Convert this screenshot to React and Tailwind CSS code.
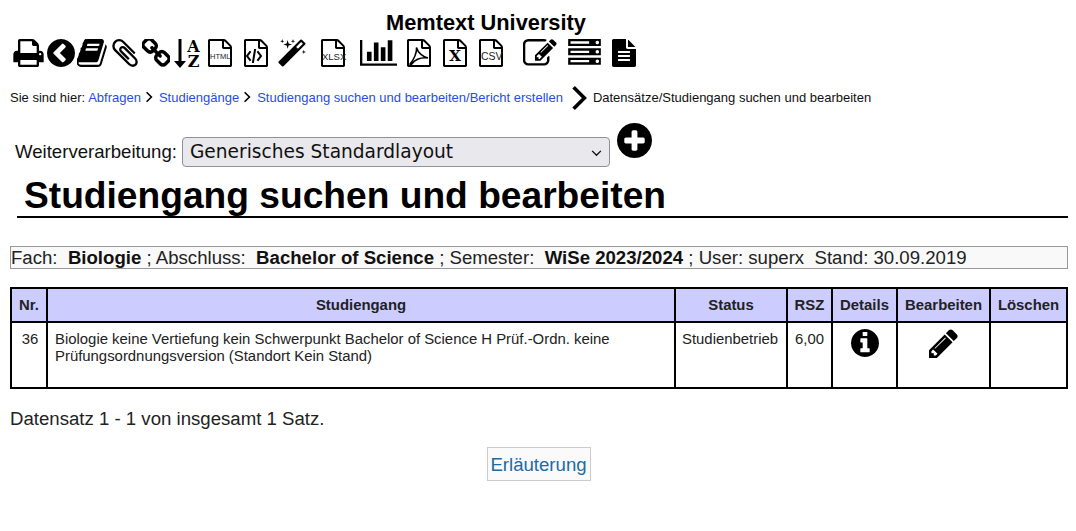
const PATHS = {
  print: "M448 1536h896v-256h-896v256zm0-640h896v-384h-160q-40 0-68-28t-28-68v-160h-640v640zm1152 64q0-26-19-45t-45-19-45 19-19 45 19 45 45 19 45-19 19-45zm128 0v416q0 13-9.5 22.5t-22.5 9.5h-224v160q0 40-28 68t-68 28h-960q-40 0-68-28t-28-68v-160h-224q-13 0-22.5-9.5t-9.5-22.5v-416q0-79 56.5-135.5t135.5-56.5h64v-544q0-40 28-68t68-28h672q40 0 88 20t76 48l152 152q28 28 48 76t20 88v256h64q79 0 135.5 56.5t56.5 135.5z",
  back: "M1037 1395l102-102q19-19 19-45t-19-45l-307-307 307-307q19-19 19-45t-19-45l-102-102q-19-19-45-19t-45 19l-454 454q-19 19-19 45t19 45l454 454q19 19 45 19t45-19zm627-499q0 209-103 385.5t-279.5 279.5-385.5 103-385.5-103-279.5-279.5-103-385.5 103-385.5 279.5-279.5 385.5-103 385.5 103 279.5 279.5 103 385.5z",
  book: "M1639 478q40 57 18 129l-275 906q-19 64-76.5 107.5t-122.5 43.5h-923q-77 0-148.5-53.5t-99.5-131.5q-24-67-2-127 0-4 3-27t4-37q1-8-3-21.5t-3-19.5q2-11 8-21t16.5-23.5 16.5-23.5q23-38 45-91.5t30-91.5q3-10 .5-30t-.5-28q3-11 17-28t17-23q21-36 42-92t25-90q1-9-2.5-32t.5-28q4-13 22-30.5t22-22.5q19-26 42.5-84.5t27.5-96.5q1-8-3-25.5t-2-26.5q2-8 9-18t18-23 17-21q8-12 16.5-30.5t15-35 16-36 19.5-32 26.5-23.5 36-11.5 47.5 5.5l-1 3q38-9 51-9h761q74 0 114 56t18 130l-274 906q-36 119-71.5 153.5t-128.5 34.5h-869q-27 0-38 15-11 16-1 43 24 70 144 70h923q29 0 56-15.5t35-41.5l300-987q7-22 5-57 38 15 59 43zm-1064 2q-4 13 2 22.5t20 9.5h608q13 0 25.5-9.5t16.5-22.5l21-64q4-13-2-22.5t-20-9.5h-608q-13 0-25.5 9.5t-16.5 22.5zm-83 256q-4 13 2 22.5t20 9.5h608q13 0 25.5-9.5t16.5-22.5l21-64q4-13-2-22.5t-20-9.5h-608q-13 0-25.5 9.5t-16.5 22.5z",
  clip: "M1596 1385q0 117-79 196t-196 79q-135 0-235-100l-777-776q-113-115-113-271 0-159 110-270t269-111q158 0 273 113l605 606q10 10 10 22 0 16-30.5 46.5t-46.5 30.5q-13 0-23-10l-606-607q-79-77-181-77-106 0-179 75t-73 181q0 105 76 181l776 777q63 63 145 63 64 0 106-42t42-106q0-82-63-145l-581-581q-26-24-60-24-29 0-48 19t-19 48q0 32 25 59l410 410q10 10 10 22 0 16-31 47t-47 31q-12 0-22-10l-410-410q-63-61-63-149 0-82 57-139t139-57q88 0 149 63l581 581q100 98 100 235z",
  link: "M1520 1216q0-40-28-68l-208-208q-28-28-68-28-42 0-72 32 3 3 19 18.5t21.5 21.5 15 19 13 25.5 3.5 27.5q0 40-28 68t-68 28q-15 0-27.5-3.5t-25.5-13-19-15-21.5-21.5-18.5-19q-33 31-33 73 0 40 28 68l206 207q27 27 68 27 40 0 68-26l147-146q28-28 28-67zm-703-705q0-40-28-68l-206-207q-28-28-68-28-39 0-68 27l-147 146q-28 28-28 67 0 40 28 68l208 208q27 27 68 27 42 0 72-31-3-3-19-18.5t-21.5-21.5-15-19-13-25.5-3.5-27.5q0-40 28-68t68-28q15 0 27.5 3.5t25.5 13 19 15 21.5 21.5 18.5 19q33-31 33-73zm895 705q0 120-85 203l-147 146q-83 83-203 83-121 0-204-85l-206-207q-83-83-83-203 0-123 88-209l-88-88q-86 88-208 88-120 0-204-84l-208-208q-84-84-84-204t85-203l147-146q83-83 203-83 121 0 204 85l206 207q83 83 83 203 0 123-88 209l88 88q86-88 208-88 120 0 204 84l208 208q84 84 84 204z",
  file: "M1596 380q28 28 48 76t20 88v1152q0 40-28 68t-68 28h-1344q-40 0-68-28t-28-68v-1600q0-40 28-68t68-28h896q40 0 88 20t76 48zm-444-244v376h376q-10-29-22-41l-313-313q-12-12-41-22zm384 1528v-1024h-416q-40 0-68-28t-28-68v-416h-768v1536h1280z",
  code: "M480 768q8-11 21-12.5t24 6.5l51 38q11 8 12.5 21t-6.5 24l-182 243 182 243q8 11 6.5 24t-12.5 21l-51 38q-11 8-24 6.5t-21-12.5l-226-301q-14-19 0-38zm802 301q14 19 0 38l-226 301q-8 11-21 12.5t-24-6.5l-51-38q-11-8-12.5-21t6.5-24l182-243-182-243q-8-11-6.5-24t12.5-21l51-38q11-8 24-6.5t21 12.5zm-620 461q-13-2-20.5-13t-5.5-24l138-831q2-13 13-20.5t24-5.5l63 10q13 2 20.5 13t5.5 24l-138 831q-2 13-13 20.5t-24 5.5z",
  magic: "M1254 581l293-293-107-107-293 293zm447-293q0 27-18 45l-1286 1286q-18 18-45 18t-45-18l-198-198q-18-18-18-45t18-45l1286-1286q18-18 45-18t45 18l198 198q18 18 18 45zm-1351-190l98 30-98 30-30 98-30-98-98-30 98-30 30-98zm350 162l196 60-196 60-60 196-60-196-196-60 196-60 60-196zm930 478l98 30-98 30-30 98-30-98-98-30 98-30 30-98zm-640-640l98 30-98 30-30 98-30-98-98-30 98-30 30-98z",
  chart: "M640 896v512h-256v-512h256zm384-512v1024h-256v-1024h256zm1024 1152v128h-2048v-1536h128v1408h1920zm-640-896v768h-256v-768h256zm384-384v1152h-256v-1152h256z",
  edit: "M888 1184l116-116-152-152-116 116v56h96v96h56zm440-720q-16-16-33 1l-350 350q-17 17-1 33t33-1l350-350q17-17 1-33zm80 594v190q0 119-84.5 203.5t-203.5 84.5h-832q-119 0-203.5-84.5t-84.5-203.5v-832q0-119 84.5-203.5t203.5-84.5h832q63 0 117 25 15 7 18 23 3 17-9 29l-49 49q-14 14-32 8-23-6-45-6h-832q-66 0-113 47t-47 113v832q0 66 47 113t113 47h832q66 0 113-47t47-113v-126q0-13 9-22l64-64q15-15 35-7t20 29zm-96-738l288 288-672 672h-288v-288zm444 132l-92 92-288-288 92-92q28-28 68-28t68 28l152 152q28 28 28 68t-28 68z",
  server: "M128 1408h1024v-128h-1024v128zm0-512h1024v-128h-1024v128zm1568 448q0-40-28-68t-68-28-68 28-28 68 28 68 68 28 68-28 28-68zm-1568-960h1024v-128h-1024v128zm1568 448q0-40-28-68t-68-28-68 28-28 68 28 68 68 28 68-28 28-68zm0-512q0-40-28-68t-68-28-68 28-28 68 28 68 68 28 68-28 28-68zm96 832v384h-1792v-384h1792zm0-512v384h-1792v-384h1792zm0-512v384h-1792v-384h1792z",
  doc: "M1596 476q14 14 28 36h-472v-472q22 14 36 28zm-476 164h544v1056q0 40-28 68t-68 28h-1344q-40 0-68-28t-28-68v-1600q0-40 28-68t68-28h800v544q0 40 28 68t68 28zm160 736v-64q0-14-9-23t-23-9h-704q-14 0-23 9t-9 23v64q0 14 9 23t23 9h704q14 0 23-9t9-23zm0-256v-64q0-14-9-23t-23-9h-704q-14 0-23 9t-9 23v64q0 14 9 23t23 9h704q14 0 23-9t9-23zm0-256v-64q0-14-9-23t-23-9h-704q-14 0-23 9t-9 23v64q0 14 9 23t23 9h704q14 0 23-9t9-23z",
  plus: "M1344 960v-128q0-26-19-45t-45-19h-256v-256q0-26-19-45t-45-19h-128q-26 0-45 19t-19 45v256h-256q-26 0-45 19t-19 45v128q0 26 19 45t45 19h256v256q0 26 19 45t45 19h128q26 0 45-19t19-45v-256h256q26 0 45-19t19-45zm320-64q0 209-103 385.5t-279.5 279.5-385.5 103-385.5-103-279.5-279.5-103-385.5 103-385.5 279.5-279.5 385.5-103 385.5 103 279.5 279.5 103 385.5z",
  info: "M1152 1376v-160q0-14-9-23t-23-9h-96v-512q0-14-9-23t-23-9h-320q-14 0-23 9t-9 23v160q0 14 9 23t23 9h96v320h-96q-14 0-23 9t-9 23v160q0 14 9 23t23 9h448q14 0 23-9t9-23zm-128-896v-160q0-14-9-23t-23-9h-192q-14 0-23 9t-9 23v160q0 14 9 23t23 9h192q14 0 23-9t9-23zm640 416q0 209-103 385.5t-279.5 279.5-385.5 103-385.5-103-279.5-279.5-103-385.5 103-385.5 279.5-279.5 385.5-103 385.5 103 279.5 279.5 103 385.5z",
  pencil: "M491 1536l91-91-235-235-91 91v107h128v128h107zm523-928q0-22-22-22-10 0-17 7l-542 542q-7 7-7 17 0 22 22 22 10 0 17-7l542-542q7-7 7-17zm-54-192l416 416-832 832h-416v-416zm683 96q0 53-37 90l-166 166-416-416 166-165q36-38 90-38 53 0 91 38l235 234q37 39 37 91z",
};

function Glyph({ name, box = "0 0 1792 1792", className }) {
  return (
    <svg viewBox={box} className={className} fill="currentColor">
      <path d={PATHS[name]} />
    </svg>
  );
}

// outline page, anything passed in is laid over it
function FilePage({ className, children }) {
  return (
    <span className={`relative block h-[28px] w-[24px] shrink-0 ${className}`}>
      <Glyph name="file" box="128 0 1536 1792" className="absolute h-[28px] w-[24px]" />
      {children}
    </span>
  );
}

function SortIcon() {
  return (
    <svg viewBox="0 0 26 29" className="ml-[4px] h-[29px] w-[26px] shrink-0 overflow-visible font-['DejaVu_Serif',serif] text-[16px] font-bold" fill="currentColor">
      <path d="M4.5 0h3v22h4.500l-6 7-6-7h4.500z" />
      <text x="19.500" y="12.500" textAnchor="middle">A</text>
      <text x="19.500" y="28" textAnchor="middle">Z</text>
    </svg>
  );
}

function Chevron({ className }) {
  return (
    <svg viewBox="0 0 10 14" className={className} fill="none" stroke="currentColor" strokeWidth="2">
      <path d="M2 1l6 6-6 6" />
    </svg>
  );
}

function Toolbar() {
  return (
    <div className="ml-[13px] flex h-[28px] items-start">
      <Glyph name="print" box="64 128 1664 1536" className="h-[28px] w-[31px] shrink-0" />
      <Glyph name="back" box="128 128 1536 1536" className="ml-[3px] h-[28px] w-[28px] shrink-0" />
      <Glyph name="book" box="90 128 1580 1536" className="ml-[2px] h-[28px] w-[31px] shrink-0" />
      <Glyph name="clip" box="190 128 1410 1536" className="ml-[4px] h-[28px] w-[26px] shrink-0" />
      <Glyph name="link" box="128 128 1536 1536" className="ml-[4px] h-[28px] w-[28px] shrink-0" />
      <SortIcon />
      <FilePage className="ml-[8px]">
        <span className="absolute left-[2px] top-[14px] text-[7.5px] leading-none text-[#222]">HTML</span>
      </FilePage>
      <FilePage className="ml-[12px]">
        <Glyph name="code" box="128 0 1536 1792" className="absolute h-[28px] w-[24px]" />
      </FilePage>
      <Glyph name="magic" box="90 0 1620 1664" className="ml-[10px] h-[28px] w-[28px] shrink-0" />
      <FilePage className="ml-[15px]">
        <span className="absolute left-[1px] top-[13px] text-[9.5px] leading-none text-[#222]">XLSX</span>
      </FilePage>
      <Glyph name="chart" box="0 256 2048 1408" className="ml-[15px] mt-[1px] h-[26px] w-[37px] shrink-0" />
      <FilePage className="ml-[10px]">
        <svg viewBox="0 0 24 28" className="absolute h-[28px] w-[24px]" fill="none" stroke="currentColor" strokeWidth="1.5">
          <path d="M9.500 8.500c.5 5-2.500 12-6.500 16.500.5.800 1.500.500 2-.200 3-4 9-6.500 16-5.800-5-1-10-5-11.500-10.500z" />
        </svg>
      </FilePage>
      <FilePage className="ml-[12px]">
        <span className="absolute inset-x-0 top-[9px] text-center font-['DejaVu_Serif',serif] text-[15px] font-bold leading-[17px]">X</span>
      </FilePage>
      <FilePage className="ml-[12px]">
        <span className="absolute left-[2px] top-[12px] text-[10.5px] leading-none text-[#222]">CSV</span>
      </FilePage>
      <Glyph name="edit" box="128 128 1664 1536" className="ml-[20px] h-[29px] w-[36px] shrink-0" />
      <Glyph name="server" box="0 128 1792 1536" className="ml-[8px] h-[28px] w-[35px] shrink-0" />
      <Glyph name="doc" box="128 0 1536 1792" className="ml-[10px] h-[28px] w-[24px] shrink-0" />
    </div>
  );
}

function Breadcrumb() {
  return (
    <div className="ml-[10px] mt-[16px] flex h-[30px] items-center whitespace-nowrap text-[13px] text-[#111]">
      <span>Sie sind hier:</span>
      <a className="ml-[3px] text-[#2a4be8]">Abfragen</a>
      <Chevron className="ml-[4px] mt-[-2px] h-[12px] w-[8px] text-black" />
      <a className="ml-[6px] text-[#2a4be8]">Studiengänge</a>
      <Chevron className="ml-[4px] mt-[-2px] h-[12px] w-[8px] text-black" />
      <a className="ml-[6px] text-[#2a4be8]">Studiengang suchen und bearbeiten/Bericht erstellen</a>
      <Chevron className="ml-[7px] h-[30px] w-[18px] text-black" />
      <span className="ml-[5px]">Datensätze/Studiengang suchen und bearbeiten</span>
    </div>
  );
}

function Results() {
  const th = "border-2 border-black bg-[#ccccff] px-[4px] text-center font-bold";
  const cell = "border-2 border-black align-top";
  return (
    <table className="ml-[10px] mt-[18px] h-[102px] w-[1058px] table-fixed border-collapse text-[14.9px] leading-[17px] text-[#222]">
      <colgroup>
        <col className="w-[36px]" />
        <col className="w-[628px]" />
        <col className="w-[112px]" />
        <col className="w-[45px]" />
        <col className="w-[65px]" />
        <col className="w-[93px]" />
        <col className="w-[77px]" />
      </colgroup>
      <thead>
        <tr className="h-[34px]">
          <th className={th}>Nr.</th>
          <th className={th}>Studiengang</th>
          <th className={th}>Status</th>
          <th className={th}>RSZ</th>
          <th className={th}>Details</th>
          <th className={th}>Bearbeiten</th>
          <th className={th}>Löschen</th>
        </tr>
      </thead>
      <tbody>
        <tr>
          <td className={`${cell} pl-[8px] pr-[6px] pt-[8px] text-center`}>36</td>
          <td className={`${cell} pl-[7px] pr-[7px] pt-[8px]`}>
            Biologie keine Vertiefung kein Schwerpunkt Bachelor of Science H Prüf.-Ordn. keine Prüfungsordnungsversion (Standort Kein Stand)
          </td>
          <td className={`${cell} whitespace-nowrap pl-[6px] pt-[8px]`}>Studienbetrieb</td>
          <td className={`${cell} pt-[8px] text-center`}>6,00</td>
          <td className={`${cell} pt-[6px]`}>
            <Glyph name="info" box="128 128 1536 1536" className="mx-auto h-[28px] w-[28px] text-black" />
          </td>
          <td className={`${cell} pt-[6px]`}>
            <Glyph name="pencil" box="128 128 1536 1536" className="mx-auto h-[29px] w-[29px] text-black" />
          </td>
          <td className={cell}></td>
        </tr>
      </tbody>
    </table>
  );
}

export default function App() {
  return (
    <div className="min-h-[531px] w-[1076px] bg-white pt-[10px] font-['Liberation_Sans',Arial,sans-serif] text-black">
      <div className="w-[972px] text-center text-[21.8px] font-bold leading-[26px]">Memtext University</div>
      <div className="mt-[3px]">
        <Toolbar />
      </div>
      <Breadcrumb />

      <div className="ml-[15px] mt-[11px] flex h-[44px] items-start">
        <label className="mt-[17px] text-[18.6px] leading-[21px] text-[#111]">Weiterverarbeitung:</label>
        <div className="relative ml-[5px] mt-[13px]">
          <select className="block h-[30px] w-[428px] appearance-none rounded-[4px] border border-[#8f8f9d] bg-[#e9e9ed] pl-[7px] font-['DejaVu_Sans',sans-serif] text-[18.6px] text-[#111]">
            <option>Generisches Standardlayout</option>
          </select>
          <svg viewBox="0 0 12 8" className="pointer-events-none absolute right-[8px] top-[13px] h-[7px] w-[11px]" fill="none" stroke="#111" strokeWidth="1.6">
            <path d="M1 1l5 5 5-5" />
          </svg>
        </div>
        <Glyph name="plus" box="128 128 1536 1536" className="ml-[7px] mt-[-1px] h-[35px] w-[35px]" />
      </div>

      <h1 className="ml-[17px] mt-[5px] h-[45px] w-[1051px] border-b-2 border-black pl-[7px] text-[37.16px] font-bold leading-[45px]">
        Studiengang suchen und bearbeiten
      </h1>

      <div className="ml-[10px] mt-[28px] h-[23px] w-[1058px] whitespace-pre border border-[#999] bg-[#f9f9f9] text-[18.63px] leading-[21px] text-[#222]">
        Fach:  <b className="text-[#111]">Biologie</b> ; Abschluss:  <b className="text-[#111]">Bachelor of Science</b> ; Semester:  <b className="text-[#111]">WiSe 2023/2024</b> ; User: superx  Stand: 30.09.2019
      </div>

      <Results />

      <p className="ml-[10px] mt-[19px] text-[18.63px] leading-[22px] text-[#222]">Datensatz 1 - 1 von insgesamt 1 Satz.</p>

      <div className="mt-[17px] flex justify-center pl-[1px]">
        <a className="block h-[34px] w-[104px] border border-[#ccc] bg-[#fafafa] text-center text-[18.63px] leading-[33px] text-[#1d6aa5]">Erläuterung</a>
      </div>
    </div>
  );
}
